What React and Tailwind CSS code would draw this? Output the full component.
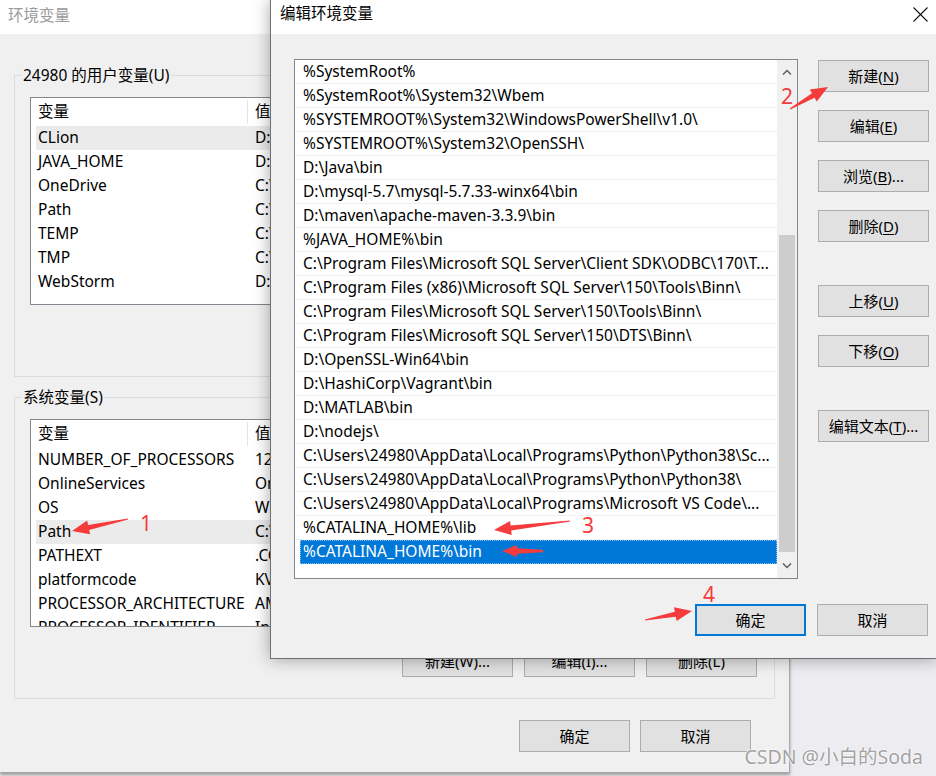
import React from "react";

const userVars = [
  ["CLion", "D:\\JetBrains\\CLion 2020.3\\bin;"],
  ["JAVA_HOME", "D:\\Java\\jdk1.8.0_281"],
  ["OneDrive", "C:\\Users\\24980\\OneDrive"],
  ["Path", "C:\\Users\\24980\\AppData\\Local\\Microsoft\\WindowsApps"],
  ["TEMP", "C:\\Users\\24980\\AppData\\Local\\Temp"],
  ["TMP", "C:\\Users\\24980\\AppData\\Local\\Temp"],
  ["WebStorm", "D:\\JetBrains\\WebStorm\\bin;"],
];

const sysVars = [
  ["NUMBER_OF_PROCESSORS", "12"],
  ["OnlineServices", "Online Services"],
  ["OS", "Windows_NT"],
  ["Path", "C:\\Program Files\\Common Files"],
  ["PATHEXT", ".COM;.EXE;.BAT;.CMD"],
  ["platformcode", "KV"],
  ["PROCESSOR_ARCHITECTURE", "AMD64"],
  ["PROCESSOR_IDENTIFIER", "Intel64 Family 6"],
];

const paths = [
  "%SystemRoot%",
  "%SystemRoot%\\System32\\Wbem",
  "%SYSTEMROOT%\\System32\\WindowsPowerShell\\v1.0\\",
  "%SYSTEMROOT%\\System32\\OpenSSH\\",
  "D:\\Java\\bin",
  "D:\\mysql-5.7\\mysql-5.7.33-winx64\\bin",
  "D:\\maven\\apache-maven-3.3.9\\bin",
  "%JAVA_HOME%\\bin",
  "C:\\Program Files\\Microsoft SQL Server\\Client SDK\\ODBC\\170\\T...",
  "C:\\Program Files (x86)\\Microsoft SQL Server\\150\\Tools\\Binn\\",
  "C:\\Program Files\\Microsoft SQL Server\\150\\Tools\\Binn\\",
  "C:\\Program Files\\Microsoft SQL Server\\150\\DTS\\Binn\\",
  "D:\\OpenSSL-Win64\\bin",
  "D:\\HashiCorp\\Vagrant\\bin",
  "D:\\MATLAB\\bin",
  "D:\\nodejs\\",
  "C:\\Users\\24980\\AppData\\Local\\Programs\\Python\\Python38\\Sc...",
  "C:\\Users\\24980\\AppData\\Local\\Programs\\Python\\Python38\\",
  "C:\\Users\\24980\\AppData\\Local\\Programs\\Microsoft VS Code\\...",
  "%CATALINA_HOME%\\lib",
];

const Btn = ({ children, primary, className = "" }) => (
  <div
    className={
      "flex items-center justify-center w-[111px] h-[32px] bg-[#e1e1e1] text-[15px] text-black shrink-0 " +
      (primary ? "border-2 border-[#0078d7] " : "border border-[#adadad] ") +
      className
    }
  >
    {children}
  </div>
);

const U = ({ children }) => <span className="underline underline-offset-2">{children}</span>;

const VarList = ({ rows, selected }) => (
  <div className="h-[208px] border border-[#828790] bg-white overflow-hidden text-[15.5px] text-black">
    <div className="flex h-[28px] items-center">
      <div className="w-[217px] h-[24px] flex items-center pl-[7px] border-r border-[#e5e5e5]">变量</div>
      <div className="pl-[7px]">值</div>
    </div>
    {rows.map(([name, value]) => (
      <div
        key={name}
        className={
          "flex ml-[5px] h-[24px] leading-[23px] whitespace-nowrap " + (name === selected ? "bg-[#ebebeb]" : "")
        }
      >
        <div className="w-[217px] pl-[2px]">{name}</div>
        <div className="pl-[2px]">{value}</div>
      </div>
    ))}
  </div>
);

const Group = ({ title, children, className = "" }) => (
  <div className={"w-[761px] h-[302px] border border-[#dcdcdc] px-[15px] " + className}>
    <div className="-mt-[11px] -ml-[8px] px-[1px] w-fit bg-[#f0f0f0] leading-[20px] text-[15.5px] text-black">
      {title}
    </div>
    {children}
  </div>
);

const Chevron = ({ up }) => (
  <svg width="10" height="6" viewBox="0 0 10 6">
    <polyline
      points={up ? "1,5.5 5,1.5 9,5.5" : "1,0.5 5,4.5 9,0.5"}
      fill="none"
      stroke="#606060"
      strokeWidth="1.5"
    />
  </svg>
);

// tapered red arrow: thin tail, triangle head at the tip
function arrowPoints(x1, y1, x2, y2, head = 17, hw = 7, tw = 0.6, nw = 2.6) {
  const dx = x2 - x1;
  const dy = y2 - y1;
  const len = Math.hypot(dx, dy);
  const ux = dx / len;
  const uy = dy / len;
  const px = -uy;
  const py = ux;
  const nx = x2 - ux * head;
  const ny = y2 - uy * head;
  const pts = [
    [x1 + px * tw, y1 + py * tw],
    [nx + px * nw, ny + py * nw],
    [nx + px * hw, ny + py * hw],
    [x2, y2],
    [nx - px * hw, ny - py * hw],
    [nx - px * nw, ny - py * nw],
    [x1 - px * tw, y1 - py * tw],
  ];
  return pts.map((p) => p.join(",")).join(" ");
}

const Annotations = () => (
  <svg className="absolute inset-0 pointer-events-none" width="936" height="776">
    <polygon points={arrowPoints(128, 519, 72, 531)} fill="#f53b3b" />
    <polygon points={arrowPoints(790, 109, 828, 87)} fill="#f53b3b" />
    <polygon points={arrowPoints(570, 521, 494, 530)} fill="#f53b3b" />
    <polygon points={arrowPoints(543, 551, 502, 551, 15, 6, 1.2, 2.8)} fill="#f53b3b" />
    <polygon points={arrowPoints(645, 620, 692, 611)} fill="#f53b3b" />
    <text x="140" y="531" fontSize="21" fill="#f53b3b" fontFamily="Noto Sans">1</text>
    <text x="781" y="104" fontSize="21" fill="#f53b3b" fontFamily="Noto Sans">2</text>
    <text x="582" y="533" fontSize="21" fill="#f53b3b" fontFamily="Noto Sans">3</text>
    <text x="703" y="602" fontSize="21" fill="#f53b3b" fontFamily="Noto Sans">4</text>
  </svg>
);

export default function App() {
  return (
    <div className="relative w-[936px] h-[776px] overflow-hidden bg-[#ededf1] font-['Noto_Sans','Noto_Sans_CJK_SC',sans-serif]">
      {/* back window: 环境变量 */}
      <div className="absolute left-0 top-0 w-[790px] h-[773px] bg-[#f0f0f0] border-r border-b border-[#a8a8a8] shadow-[0_2px_3px_rgba(0,0,0,0.35)] flex flex-col">
        <div className="h-[34px] bg-white flex items-center pl-[8px] pb-[3px] text-[15.5px] text-[#9a9a9a] shrink-0">环境变量</div>
        <div className="px-[14px]">
          <Group title="24980 的用户变量(U)" className="mt-[41px]">
            <div className="mt-[12px]">
              <VarList rows={userVars} selected="CLion" />
            </div>
          </Group>
          <Group title="系统变量(S)" className="mt-[20px]">
            <div className="mt-[12px]">
              <VarList rows={sysVars} selected="Path" />
            </div>
            <div className="mt-[18px] flex justify-end gap-[11px] pr-[2px]">
              <Btn>新建(W)...</Btn>
              <Btn>编辑(I)...</Btn>
              <Btn>删除(L)</Btn>
            </div>
          </Group>
          <div className="mt-[21px] flex justify-end gap-[10px] pr-[24px]">
            <Btn>确定</Btn>
            <Btn>取消</Btn>
          </div>
        </div>
      </div>

      {/* front dialog: 编辑环境变量 */}
      <div className="absolute left-[270px] top-0 w-[668px] h-[659px] bg-[#f0f0f0] border-l border-b border-[#707070] shadow-[0_0_16px_rgba(0,0,0,0.35)] flex flex-col">
        <div className="h-[34px] bg-white flex items-center justify-between pl-[9px] pb-[6px] shrink-0">
          <span className="text-[15.5px] text-black">编辑环境变量</span>
          <svg width="15" height="15" viewBox="0 0 15 15" className="mr-[10px]">
            <line x1="0.5" y1="0.5" x2="14.5" y2="14.5" stroke="#111" strokeWidth="1.1" />
            <line x1="14.5" y1="0.5" x2="0.5" y2="14.5" stroke="#111" strokeWidth="1.1" />
          </svg>
        </div>
        <div className="pl-[23px] pt-[25px]">
          <div className="flex">
            <div className="w-[504px] h-[520px] border border-[#828790] bg-white flex text-[15.5px] text-black">
              <div className="flex-1 overflow-hidden">
                {paths.map((p) => (
                  <div key={p} className="h-[24px] leading-[22px] pl-[8px] border-b border-[#efefef] whitespace-nowrap">
                    {p}
                  </div>
                ))}
                <div className="h-[24px] ml-[5px] bg-[#0078d7] text-white leading-[21px] pl-[2px] border border-dotted border-[#8fc1ee] whitespace-nowrap">
                  %CATALINA_HOME%\bin
                </div>
              </div>
              <div className="w-[20px] bg-[#f0f0f0] flex flex-col">
                <div className="h-[24px] flex items-center justify-center">
                  <Chevron up />
                </div>
                <div className="pt-[151px]">
                  <div className="h-[317px] mx-[2px] bg-[#cdcdcd]" />
                </div>
                <div className="mt-auto h-[24px] flex items-center justify-center">
                  <Chevron />
                </div>
              </div>
            </div>
            <div className="ml-[20px] flex flex-col">
              <Btn className="mt-[1px]">
                新建(<U>N</U>)
              </Btn>
              <Btn className="mt-[18px]">
                编辑(<U>E</U>)
              </Btn>
              <Btn className="mt-[18px]">
                浏览(<U>B</U>)...
              </Btn>
              <Btn className="mt-[18px]">
                删除(<U>D</U>)
              </Btn>
              <Btn className="mt-[43px]">
                上移(<U>U</U>)
              </Btn>
              <Btn className="mt-[18px]">
                下移(<U>O</U>)
              </Btn>
              <Btn className="mt-[43px]">
                编辑文本(<U>T</U>)...
              </Btn>
            </div>
          </div>
          <div className="mt-[25px] ml-[401px] flex gap-[11px]">
            <Btn primary>确定</Btn>
            <Btn>取消</Btn>
          </div>
        </div>
      </div>

      <Annotations />

      <div className="absolute right-[13px] bottom-[5px] text-[19.5px] text-[#a3a3a3] [text-shadow:0_0_2px_#fff,0_0_2px_#fff]">
        CSDN @小白的Soda
      </div>
    </div>
  );
}
